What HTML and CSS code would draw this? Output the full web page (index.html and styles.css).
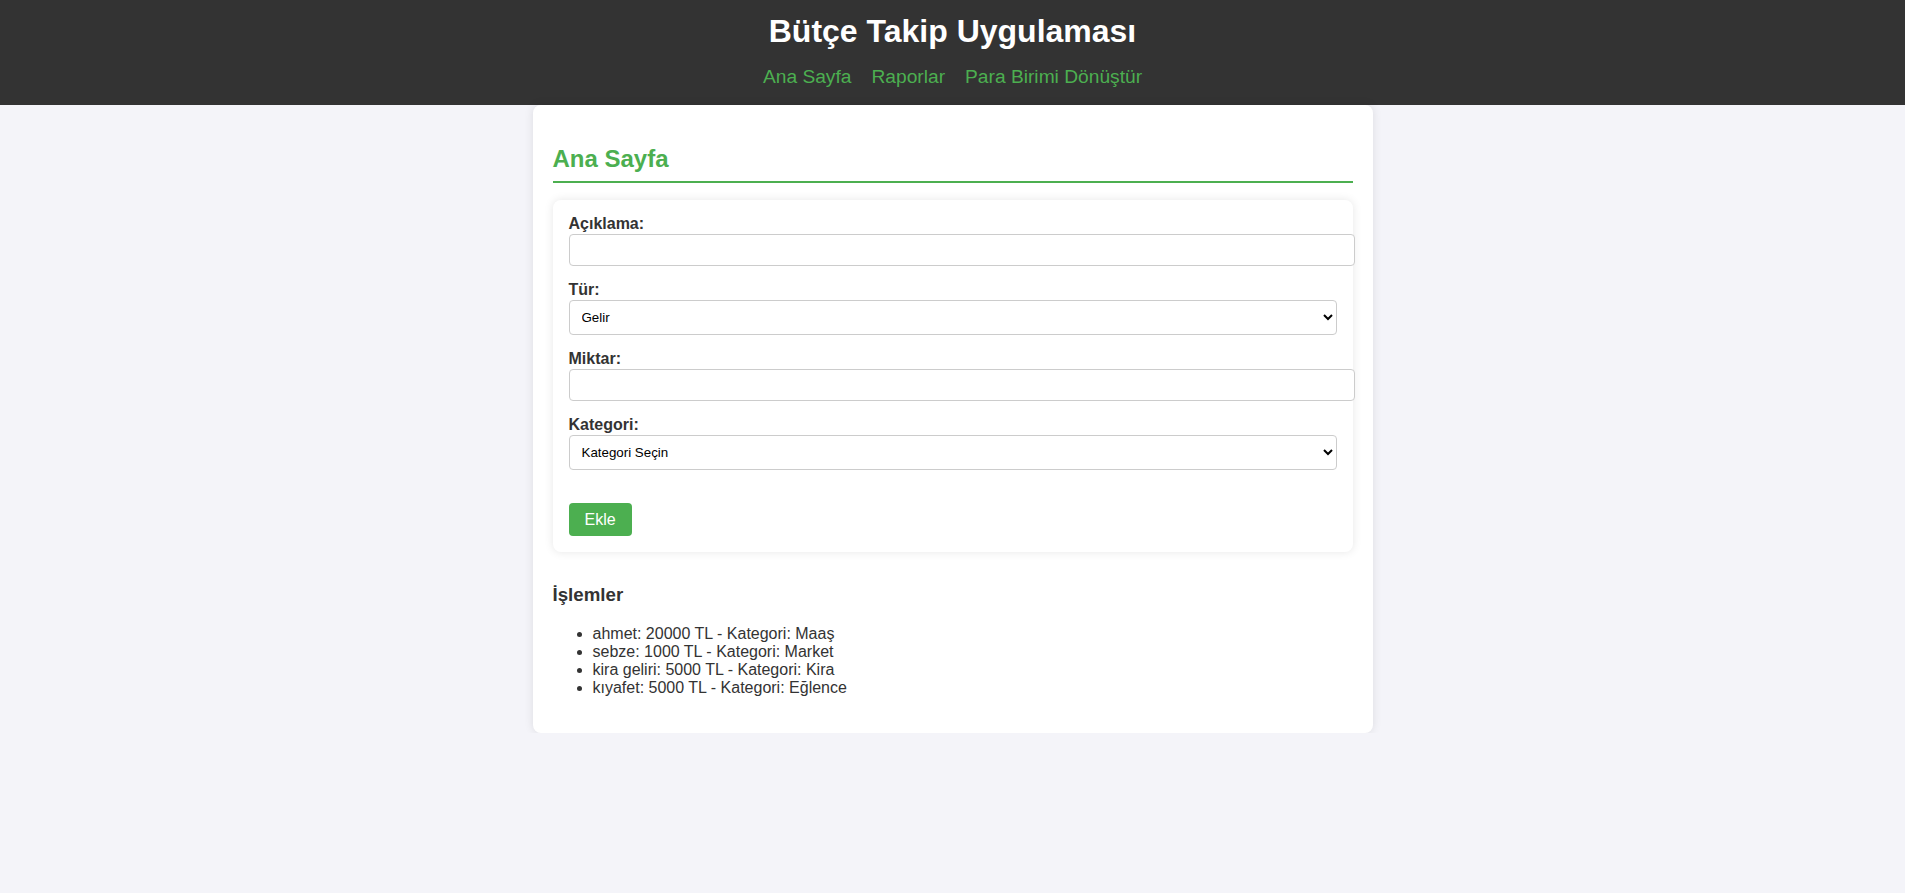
FILE: index.html
```html
<!DOCTYPE html>
<html lang="tr">
<head>
<meta charset="UTF-8">
<title>Bütçe Takip Uygulaması</title>
<link rel="stylesheet" href="styles.css">
</head>
<body>
<header class="site-header">
  <h1 class="site-title">Bütçe Takip Uygulaması</h1>
  <nav class="site-nav">
    <a href="#" class="nav-link">Ana Sayfa</a>
    <a href="#" class="nav-link">Raporlar</a>
    <a href="#" class="nav-link">Para Birimi Dönüştür</a>
  </nav>
</header>
<main class="container">
  <h2 class="page-title">Ana Sayfa</h2>
  <form class="entry-form">
    <label class="field-label" for="aciklama">Açıklama:</label>
    <input class="text-input" type="text" id="aciklama">
    <label class="field-label" for="tur">Tür:</label>
    <select class="select-input" id="tur">
      <option>Gelir</option>
      <option>Gider</option>
    </select>
    <label class="field-label" for="miktar">Miktar:</label>
    <input class="text-input" type="number" id="miktar">
    <label class="field-label" for="kategori">Kategori:</label>
    <select class="select-input" id="kategori">
      <option>Kategori Seçin</option>
    </select>
    <button type="button" class="add-btn">Ekle</button>
  </form>
  <h3 class="section-title">İşlemler</h3>
  <ul class="tx-list">
    <li>ahmet: 20000 TL - Kategori: Maaş</li>
    <li>sebze: 1000 TL - Kategori: Market</li>
    <li>kira geliri: 5000 TL - Kategori: Kira</li>
    <li>kıyafet: 5000 TL - Kategori: Eğlence</li>
  </ul>
</main>
</body>
</html>
```

FILE: styles.css
```css
body {
  margin: 0;
  font-family: "Liberation Sans", Arial, sans-serif;
  background: #f4f4f9;
  color: #333;
}

.site-header {
  background: #333;
  color: #fff;
  text-align: center;
  padding: 13px 0 17px;
}

.site-title {
  margin: 0 0 16px;
  font-size: 32px;
  font-weight: bold;
}

.site-nav {
  display: flex;
  justify-content: center;
  gap: 20px;
  font-size: 19.2px;
}

.nav-link {
  color: #4CAF50;
  text-decoration: none;
}

.container {
  max-width: 800px;
  margin: 0 auto;
  background: #fff;
  padding: 20px;
  border-radius: 8px;
  box-shadow: 0 0 10px rgba(0, 0, 0, 0.1);
}

.page-title {
  color: #4CAF50;
  font-size: 24px;
  margin: 20px 0 17px;
  padding-bottom: 8px;
  border-bottom: 2px solid #4CAF50;
}

.entry-form {
  background: #fff;
  padding: 15px 16px 16px;
  border-radius: 8px;
  box-shadow: 0 0 10px rgba(0, 0, 0, 0.1);
  margin-bottom: 32px;
}

.field-label {
  display: block;
  font-weight: bold;
  font-size: 16px;
  margin-bottom: 1px;
}

.text-input {
  display: block;
  width: 100%;
  padding: 8px;
  font-family: "Liberation Sans", Arial, sans-serif;
  font-size: 13.33px;
  line-height: 14px;
  border: 1px solid #ccc;
  border-radius: 4px;
  margin: 0 0 15px;
  background: #fff;
}

.select-input {
  display: block;
  width: 100%;
  padding: 8px;
  font-family: "Liberation Sans", Arial, sans-serif;
  font-size: 13.33px;
  border: 1px solid #ccc;
  border-radius: 4px;
  margin: 0 0 15px;
  background: #fff;
  color: #000;
}

.add-btn {
  display: block;
  margin-top: 33px;
  background: #4CAF50;
  color: #fff;
  border: 0;
  border-radius: 4px;
  padding: 8px 16px;
  font-family: "Liberation Sans", Arial, sans-serif;
  font-size: 16px;
  line-height: 17px;
}

.section-title {
  font-size: 18.72px;
  margin: 18.72px 0;
}

.tx-list {
  font-size: 16px;
  margin: 16px 0;
  padding-left: 40px;
}
```
